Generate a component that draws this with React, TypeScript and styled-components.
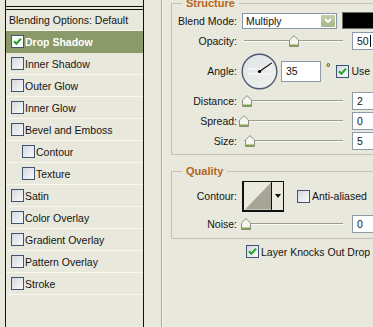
import React from "react";
import styled, { createGlobalStyle } from "styled-components";

const BG = "#e9e8dc";

const Global = createGlobalStyle`
  html, body { margin: 0; padding: 0; background: ${BG}; }
  body { font-family: "Liberation Sans", Arial, sans-serif; }
`;

const Window = styled.div`
  width: 373px;
  height: 327px;
  overflow: hidden;
  display: flex;
  background: ${BG};
  font-family: "Liberation Sans", Arial, sans-serif;
  font-size: 10.5px;
  color: #141414;
`;

/* ---------- left list ---------- */
const StylesList = styled.div`
  flex: none;
  margin-left: 5px;
  width: 137px;
  border-left: 1px solid #111;
  border-right: 1px solid #111;
  display: flex;
  flex-direction: column;
`;

const ListTop = styled.div`
  flex: none;
  height: 6px;
`;

const DoubleRule = styled.div`
  flex: none;
  height: 2px;
  border-top: 1px solid #111;
  border-bottom: 1px solid #111;
`;

const ListHeader = styled.div`
  flex: none;
  height: 20px;
  display: flex;
  align-items: center;
  padding-left: 3px;
  border-bottom: 1px solid #f7f6ef;
  white-space: nowrap;
`;

const ListRow = styled.div<{ $indent?: boolean; $selected?: boolean }>`
  flex: none;
  height: 21px;
  display: flex;
  align-items: center;
  gap: 1px;
  padding-left: ${(p) => (p.$indent ? 16 : 5)}px;
  border-bottom: 1px solid ${(p) => (p.$selected ? "#8b9a6b" : "#f7f6ef")};
  background: ${(p) => (p.$selected ? "#8b9a6b" : "transparent")};
  color: ${(p) => (p.$selected ? "#ffffff" : "#141414")};
  font-weight: ${(p) => (p.$selected ? "bold" : "normal")};
  white-space: nowrap;
`;

/* ---------- checkbox ---------- */
const Box = styled.span<{ $white?: boolean }>`
  flex: none;
  width: 13px;
  height: 13px;
  box-sizing: border-box;
  border: 1px solid #3f5470;
  background: ${(p) =>
    p.$white ? "#ffffff" : "linear-gradient(135deg, #d3d8df 0%, #eef0f2 70%, #f8f8f8 100%)"};
  display: inline-flex;
  align-items: center;
  justify-content: center;
`;

const Check: React.FC<{ on?: boolean; white?: boolean }> = ({ on, white }) => (
  <Box $white={white}>
    {on && (
      <svg width="11" height="11" viewBox="0 0 11 11">
        <path d="M2 5.2 L4.4 7.8 L9 2.6" fill="none" stroke="#22a62a" strokeWidth="2.1" />
      </svg>
    )}
  </Box>
);

/* ---------- divider ---------- */
const Divider = styled.div`
  flex: none;
  margin-left: 17px;
  width: 1px;
  background: #a8a79b;
  box-shadow: 1px 0 0 #f7f7f0;
`;

/* ---------- right side ---------- */
const RightArea = styled.div`
  flex: none;
  width: 260px;
  padding-left: 9px;
  display: flex;
  flex-direction: column;
`;

const Group = styled.fieldset<{ $top: number; $bottom: number }>`
  margin: ${(p) => p.$top}px 0 0 0;
  padding: 0 0 ${(p) => p.$bottom}px 0;
  width: 230px;
  min-width: 0;
  box-sizing: border-box;
  border: 1px solid #c2c1b3;
`;

const GroupTitle = styled.legend`
  margin-left: 10px;
  padding: 0 4px;
  font-family: "Liberation Sans", Arial, sans-serif;
  font-weight: bold;
  font-size: 11px;
  line-height: 13px;
  color: #b5651d;
`;

const FieldRow = styled.div<{ $h: number }>`
  height: ${(p) => p.$h}px;
  display: flex;
  align-items: center;
  white-space: nowrap;
`;

const FieldLabel = styled.span`
  flex: none;
  width: 65px;
  margin-right: 4px;
  text-align: right;
`;

const Select = styled.div`
  flex: none;
  width: 95px;
  height: 16px;
  margin-left: 1px;
  box-sizing: border-box;
  border: 1px solid #8596aa;
  background: #fff;
  display: flex;
  align-items: center;
  justify-content: space-between;
  padding-left: 3px;
`;

const SelectButton = styled.span`
  flex: none;
  width: 14px;
  height: 12px;
  margin-right: 1px;
  border-radius: 1px;
  background: linear-gradient(180deg, #c3cfa9 0%, #a6b486 100%);
  display: flex;
  align-items: center;
  justify-content: center;
`;

const Swatch = styled.div`
  flex: none;
  margin-left: 5px;
  width: 40px;
  height: 17px;
  box-sizing: border-box;
  border: 1px solid #6e6e6e;
  background: #000;
`;

const Slider = styled.div`
  position: relative;
  flex: none;
  width: 102px;
  height: 12px;
  margin-right: 9px;
  &::before {
    content: "";
    position: absolute;
    left: 3px;
    right: 0;
    top: 5px;
    height: 1px;
    background: #9d9c91;
    border-bottom: 1px solid #fbfbf6;
  }
`;

const ThumbMark = styled.svg`
  position: absolute;
  top: 0;
`;

const NumField = styled.div<{ $w?: number; $h?: number }>`
  flex: none;
  width: ${(p) => p.$w ?? 40}px;
  height: ${(p) => p.$h ?? 18}px;
  box-sizing: border-box;
  border: 1px solid #8e9aa8;
  background: #fff;
  display: flex;
  align-items: center;
  padding-left: 4px;
`;

const Caret = styled.span`
  display: inline-block;
  width: 1px;
  height: 12px;
  background: #000;
  margin-left: 1px;
`;

const DialBox = styled.svg`
  flex: none;
  margin-right: 3px;
`;

const Degree = styled.span`
  align-self: flex-start;
  margin: 10px 6px 0 5px;
  font-size: 11px;
`;

const InlineCheck = styled.span<{ $ml?: number }>`
  display: flex;
  align-items: center;
  gap: 2px;
  margin-left: ${(p) => p.$ml ?? 0}px;
`;

const ContourPicker = styled.div`
  flex: none;
  display: flex;
  width: 42px;
  height: 31px;
  margin-left: 1px;
  box-sizing: border-box;
  border: 1px solid #111;
  border-left-width: 2px;
  border-bottom-width: 2px;
  background: #ebeadf;
`;

const ContourArrow = styled.div`
  flex: none;
  width: 11px;
  border-left: 1px solid #111;
  display: flex;
  align-items: center;
  justify-content: center;
  &::after {
    content: "";
    border-left: 3px solid transparent;
    border-right: 3px solid transparent;
    border-top: 4px solid #111;
  }
`;

const KnockRow = styled.div`
  display: flex;
  align-items: center;
  gap: 2px;
  margin: 6px 0 0 75px;
  white-space: nowrap;
`;

const Thumb: React.FC<{ left: number }> = ({ left }) => (
  <ThumbMark width="10" height="12" viewBox="0 0 10 12" style={{ left }}>
    <path d="M0.5 5 L5 0.6 L9.5 5 L9.5 11.5 L0.5 11.5 Z" fill="#f6f6f0" stroke="#8c8c82" strokeWidth="1" />
    <rect x="1" y="9.5" width="8" height="1.6" fill="#7aa84a" />
  </ThumbMark>
);

const SliderField: React.FC<{ thumb: number }> = ({ thumb }) => (
  <Slider>
    <Thumb left={thumb} />
  </Slider>
);

const Dial: React.FC<{ angle: number }> = ({ angle }) => {
  const c = 18.5;
  const r = 15;
  const a = (angle * Math.PI) / 180;
  return (
    <DialBox width="37" height="37" viewBox="0 0 37 37">
      <defs>
        <linearGradient id="dialFill" x1="0" y1="0" x2="1" y2="1">
          <stop offset="0" stopColor="#dfe3e8" />
          <stop offset="1" stopColor="#f1f2ee" />
        </linearGradient>
      </defs>
      <circle cx={c} cy={c} r="17.3" fill="url(#dialFill)" stroke="#4d5a72" strokeWidth="1.4" />
      <rect x="7" y="15" width="23" height="2" fill="#f7f7f3" opacity="0.8" />
      <rect x="7" y="20" width="23" height="2" fill="#f7f7f3" opacity="0.8" />
      <line x1={c} y1={c} x2={c + r * Math.cos(a)} y2={c - r * Math.sin(a)} stroke="#000" strokeWidth="1.1" />
      <circle cx={c} cy={c} r="1.6" fill="#000" />
    </DialBox>
  );
};

const effects: { name: string; indent?: boolean; selected?: boolean; on?: boolean }[] = [
  { name: "Drop Shadow", selected: true, on: true },
  { name: "Inner Shadow" },
  { name: "Outer Glow" },
  { name: "Inner Glow" },
  { name: "Bevel and Emboss" },
  { name: "Contour", indent: true },
  { name: "Texture", indent: true },
  { name: "Satin" },
  { name: "Color Overlay" },
  { name: "Gradient Overlay" },
  { name: "Pattern Overlay" },
  { name: "Stroke" },
];

export default function App() {
  return (
    <Window>
      <Global />
      <StylesList>
        <ListTop />
        <DoubleRule />
        <ListHeader>Blending Options: Default</ListHeader>
        {effects.map((e) => (
          <ListRow key={e.name} $indent={e.indent} $selected={e.selected}>
            <Check on={e.on} white={e.selected} />
            <span>{e.name}</span>
          </ListRow>
        ))}
      </StylesList>
      <Divider />
      <RightArea>
        <Group $top={-3} $bottom={3}>
          <GroupTitle>Structure</GroupTitle>
          <FieldRow $h={21}>
            <FieldLabel>Blend Mode:</FieldLabel>
            <Select>
              <span>Multiply</span>
              <SelectButton>
                <svg width="8" height="6" viewBox="0 0 8 6">
                  <path d="M1 1 L4 4 L7 1" fill="none" stroke="#fff" strokeWidth="1.8" />
                </svg>
              </SelectButton>
            </Select>
            <Swatch />
          </FieldRow>
          <FieldRow $h={20}>
            <FieldLabel>Opacity:</FieldLabel>
            <SliderField thumb={48} />
            <NumField>
              50<Caret />
            </NumField>
          </FieldRow>
          <FieldRow $h={40}>
            <FieldLabel>Angle:</FieldLabel>
            <Dial angle={35} />
            <NumField $h={21}>35</NumField>
            <Degree>°</Degree>
            <InlineCheck>
              <Check on />
              <span>Use Global Light</span>
            </InlineCheck>
          </FieldRow>
          <FieldRow $h={20}>
            <FieldLabel>Distance:</FieldLabel>
            <SliderField thumb={1} />
            <NumField>2</NumField>
          </FieldRow>
          <FieldRow $h={20}>
            <FieldLabel>Spread:</FieldLabel>
            <SliderField thumb={-2} />
            <NumField>0</NumField>
          </FieldRow>
          <FieldRow $h={20}>
            <FieldLabel>Size:</FieldLabel>
            <SliderField thumb={4} />
            <NumField>5</NumField>
          </FieldRow>
        </Group>
        <Group $top={10} $bottom={4}>
          <GroupTitle>Quality</GroupTitle>
          <FieldRow $h={36}>
            <FieldLabel>Contour:</FieldLabel>
            <ContourPicker>
              <svg width="28" height="28" viewBox="0 0 28 28">
                <polygon points="1,28 28,0 28,28" fill="#a6a597" />
              </svg>
              <ContourArrow />
            </ContourPicker>
            <InlineCheck $ml={13}>
              <Check />
              <span>Anti-aliased</span>
            </InlineCheck>
          </FieldRow>
          <FieldRow $h={20}>
            <FieldLabel>Noise:</FieldLabel>
            <SliderField thumb={0} />
            <NumField>0</NumField>
          </FieldRow>
        </Group>
        <KnockRow>
          <Check on />
          <span>Layer Knocks Out Drop Shadow</span>
        </KnockRow>
      </RightArea>
    </Window>
  );
}
